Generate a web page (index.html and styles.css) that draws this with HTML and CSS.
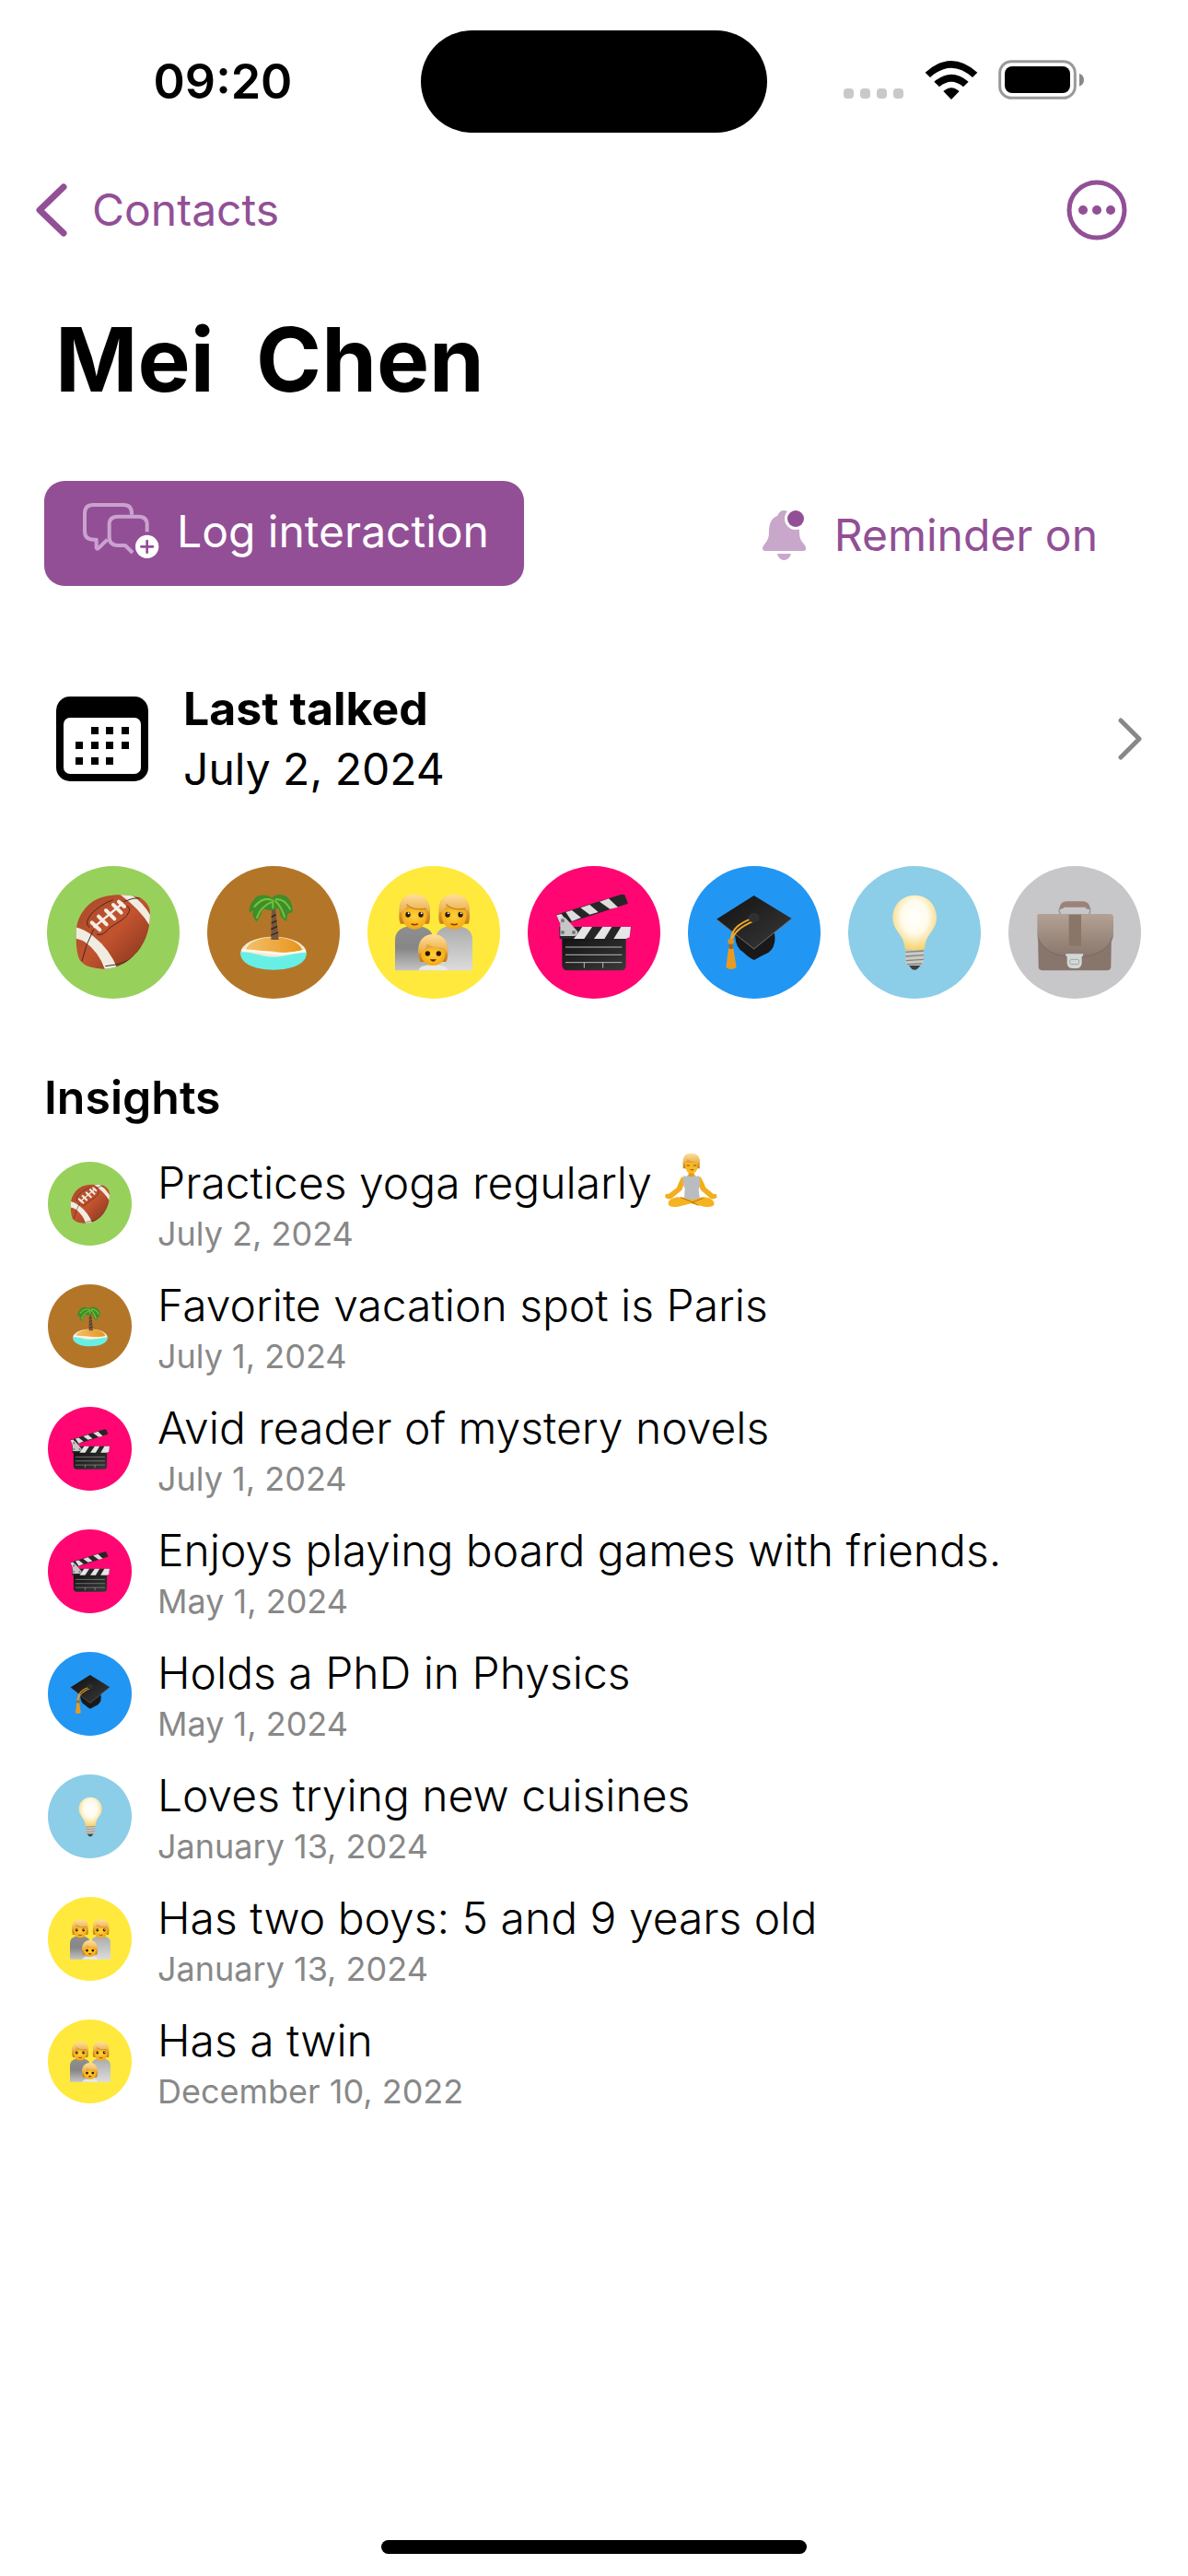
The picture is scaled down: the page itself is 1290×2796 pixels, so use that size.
FILE: index.html
```
<!DOCTYPE html>
<html lang="en">
<head>
    <meta charset="UTF-8">
    <meta name="viewport" content="width=device-width, initial-scale=1.0">
    <title>Mei Chen</title>
    <link rel="stylesheet" href="styles.css">
</head>
<body>
    <!-- Category pictures, used in both the category bar and the list -->
    <svg class="sprite" aria-hidden="true">
        <defs>
            <linearGradient id="ball" x1="0" y1="0" x2="1" y2="1">
                <stop offset="0" stop-color="#a84a2b"/>
                <stop offset=".5" stop-color="#c2532f"/>
                <stop offset="1" stop-color="#7c2f1b"/>
            </linearGradient>
            <linearGradient id="sand" x1="0" y1="0" x2="1" y2="0">
                <stop offset="0" stop-color="#f3c06a"/>
                <stop offset="1" stop-color="#e8941c"/>
            </linearGradient>
            <linearGradient id="coatDark" x1="0" y1="0" x2="0" y2="1">
                <stop offset="0" stop-color="#8f8f8f"/>
                <stop offset=".5" stop-color="#868686"/>
                <stop offset="1" stop-color="#c4c4c4"/>
            </linearGradient>
            <linearGradient id="coatLight" x1="0" y1="0" x2="0" y2="1">
                <stop offset="0" stop-color="#ababab"/>
                <stop offset="1" stop-color="#dcdcdc"/>
            </linearGradient>
            <radialGradient id="face" cx=".5" cy=".4" r=".6">
                <stop offset="0" stop-color="#ffd13b"/>
                <stop offset="1" stop-color="#f3a712"/>
            </radialGradient>
            <linearGradient id="hair" x1="0" y1="0" x2="0" y2="1">
                <stop offset="0" stop-color="#f7c670"/>
                <stop offset="1" stop-color="#c67c14"/>
            </linearGradient>
            <linearGradient id="fringe" x1="0" y1="0" x2="0" y2="1">
                <stop offset="0" stop-color="#ffdf9e"/>
                <stop offset="1" stop-color="#e9a93c"/>
            </linearGradient>
            <radialGradient id="glass" cx=".5" cy=".4" r=".6">
                <stop offset="0" stop-color="#ffffff"/>
                <stop offset=".5" stop-color="#fffbec"/>
                <stop offset="1" stop-color="#f6d36c"/>
            </radialGradient>
            <linearGradient id="leather" x1="0" y1="0" x2="0" y2="1">
                <stop offset="0" stop-color="#b3a194"/>
                <stop offset="1" stop-color="#8a776d"/>
            </linearGradient>
            <linearGradient id="cloth" x1="0" y1="0" x2="1" y2="1">
                <stop offset="0" stop-color="#111111"/>
                <stop offset="1" stop-color="#3a3a3a"/>
            </linearGradient>
            <clipPath id="ballShape">
                <path d="M5 122C8 80 28 48 60 25C90 4 140 0 180 6C215 8 240 25 245 55C248 90 242 135 215 175C185 220 140 246 95 245C50 244 20 232 12 205C5 180 4 150 5 122z"/>
            </clipPath>
        </defs>
        <symbol id="football" viewBox="0 0 252 252">
            <g clip-path="url(#ballShape)">
                <rect width="252" height="252" fill="url(#ball)"/>
                <path d="M0 108Q30 114 60 138Q115 180 140 246L100 250Q80 190 35 158Q15 146 0 146z" fill="#f1ece1"/>
                <path d="M144 0L186 4Q226 32 250 76L246 106Q212 48 144 0z" fill="#f1ece1"/>
                <path d="M24 220Q34 170 62 116M160 26Q190 12 215 14M100 236Q190 230 215 175" fill="none" stroke="#3d2b25" stroke-width="3"/>
            </g>
            <path d="M48 110Q30 95 55 65Q85 35 125 20M72 132Q90 140 110 115C130 98 165 85 176 62Q184 45 170 40" fill="none" stroke="#4f241a" stroke-width="3"/>
            <path d="M62 110L158 30" stroke="#f3eee4" stroke-width="7"/>
            <path d="M56 94L82 118M78 74L104 100M102 54L130 82M126 36L152 62M144 26L162 42" stroke="#f3eee4" stroke-width="12" stroke-linecap="round"/>
        </symbol>
        <symbol id="island" viewBox="0 0 252 252">
            <ellipse cx="126" cy="193" rx="107" ry="53" fill="#f6ead0"/>
            <path d="M36 182C45 155 90 142 128 142C172 142 212 158 220 184C180 196 160 192 128 188C90 184 60 190 36 182z" fill="url(#sand)"/>
            <path d="M19 190C60 190 80 204 120 206C160 208 190 190 233 192C236 226 190 248 126 248C65 248 14 228 19 190z" fill="#67efe6"/>
            <path d="M22 184C60 186 85 188 115 193C150 202 195 192 230 186" fill="none" stroke="#fffaf0" stroke-width="7"/>
            <path d="M118 150L120 44H132L143 150z" fill="#75563e"/>
            <path d="M118 135L142 126M118 116L138 107M119 96L136 88M119 76L134 68" stroke="#312117" stroke-width="4"/>
            <path d="M122 14C105 0 76 2 66 14C54 28 46 42 47 62L60 54L58 72L70 92L84 70L92 48L108 54L126 54L142 46L150 76L168 90L172 66L188 60C190 26 172 6 152 4C140 2 130 4 122 14z" fill="#3f8d2b"/>
            <path d="M118 20Q92 10 64 42M118 28Q84 42 72 78M124 22V46M132 24Q152 42 162 76M134 18Q162 16 180 50" fill="none" stroke="#74c23c" stroke-width="6" stroke-linecap="round"/>
        </symbol>
        <symbol id="family" viewBox="0 0 252 252">
            <path d="M0 250V150C0 120 25 105 62 105C102 105 124 120 124 150V250z" fill="url(#coatDark)"/>
            <path d="M132 250V150C132 120 155 105 190 105C230 105 252 120 252 150V250z" fill="url(#coatLight)"/>
            <path d="M76 250C80 236 98 232 124 232C150 232 168 236 172 250z" fill="#e8e8e8"/>
            <g id="grown">
                <path d="M14 56C12 18 36 3 62 3C92 3 116 22 113 58C115 76 114 88 110 98H18C12 88 12 72 14 56z" fill="url(#hair)"/>
                <path d="M22 58Q62 34 104 58C106 92 92 116 63 116C36 116 20 92 22 58z" fill="url(#face)"/>
                <path d="M14 62C12 20 34 2 62 2C94 2 118 24 112 66C110 56 106 50 98 48C72 54 48 46 38 34C38 48 30 58 14 62z" fill="url(#fringe)"/>
                <path d="M38 34C50 50 76 54 100 48" fill="none" stroke="#b97316" stroke-width="3"/>
                <ellipse cx="42" cy="68" rx="8" ry="9" fill="#2c1608"/>
                <ellipse cx="84" cy="68" rx="8" ry="9" fill="#2c1608"/>
                <circle cx="44" cy="64" r="3" fill="#ffffff"/>
                <circle cx="86" cy="64" r="3" fill="#ffffff"/>
                <path d="M53 98Q63 104 74 98" fill="none" stroke="#8c3d10" stroke-width="5"/>
            </g>
            <use href="#grown" x="129" y="0"/>
            <path d="M76 190C74 152 94 133 124 133C154 133 174 154 172 190Q172 212 166 222H82Q76 210 76 190z" fill="url(#hair)"/>
            <path d="M84 186Q125 164 164 186C166 214 150 234 124 234C98 234 82 214 84 186z" fill="url(#face)"/>
            <path d="M76 196C72 152 96 132 124 132C156 132 176 156 171 196C166 186 160 178 150 176C130 176 112 170 104 162C102 176 94 188 76 196z" fill="url(#fringe)"/>
            <circle cx="106" cy="195" r="8" fill="#2c1608"/>
            <circle cx="142" cy="195" r="8" fill="#2c1608"/>
            <path d="M113 214H135Q124 228 113 214z" fill="#5d230d"/>
        </symbol>
        <symbol id="clapper" viewBox="0 0 252 252">
            <path d="M22 138H230V236Q228 250 214 250H40Q24 250 22 234z" fill="url(#cloth)"/>
            <path d="M4 68L216 2L226 4L237 32L40 96L14 94z" fill="#262626"/>
            <path d="M34 60L54 54L84 78L54 90zM82 46L112 36L140 60L112 68zM144 26L174 16L204 44L178 50zM4 70L20 66L40 94L14 94z" fill="#dedede"/>
            <path d="M13 108H247L242 142L230 147H14z" fill="#262626"/>
            <path d="M60 147L88 108H120L94 147zM126 147L154 108H184L160 147zM190 147L214 108H246L242 142L230 147z" fill="#e6e6e6"/>
            <path d="M16 80Q30 72 36 82L73 124Q72 138 60 138H16z" fill="#c6c6c6"/>
            <circle cx="24" cy="88" r="6" fill="#777777"/>
            <circle cx="24" cy="126" r="6" fill="#777777"/>
            <circle cx="60" cy="126" r="6" fill="#777777"/>
            <path d="M33 174H217M33 199H217M33 224H217M94 224V242M155 224V242" stroke="#b9b9b9" stroke-width="3"/>
        </symbol>
        <symbol id="cap" viewBox="0 0 252 252">
            <path d="M64 120H190Q202 170 172 192Q150 202 126 216Q110 210 92 192Q60 175 64 120z" fill="#19191a"/>
            <path d="M125 6L248 81L125 180L3 83z" fill="url(#cloth)"/>
            <path d="M3 83L125 180L248 81" fill="none" stroke="#707070" stroke-width="3"/>
            <path d="M120 80C80 96 54 112 50 150M126 88C90 104 62 120 52 152" fill="none" stroke="#f0a828" stroke-width="6"/>
            <ellipse cx="125" cy="78" rx="18" ry="16" fill="#303032"/>
            <circle cx="50" cy="156" r="10" fill="#e2941c"/>
            <path d="M42 178H58L68 240Q50 252 34 240z" fill="#e89b22"/>
            <path d="M44 164H56V180H44z" fill="#a9670f"/>
        </symbol>
        <symbol id="bulb" viewBox="0 0 252 252">
            <path d="M96 178H156V220Q152 234 142 238H112Q98 232 96 220z" fill="#c9c9c5"/>
            <path d="M97 190L156 186M97 204L156 200M98 218L156 214M102 230L150 228" stroke="#84847f" stroke-width="4"/>
            <path d="M108 234H146L134 246Q127 250 118 246z" fill="#3e3f40"/>
            <path d="M127 5C170 5 198 38 198 78C198 112 174 128 165 150Q160 164 159 180Q126 186 95 180Q94 164 88 150C78 128 55 112 55 78C55 38 84 5 127 5z" fill="url(#glass)"/>
        </symbol>
        <symbol id="briefcase" viewBox="0 0 252 252">
            <path d="M80 66Q72 58 78 46M172 66Q180 58 174 46" fill="none" stroke="#94a0a2" stroke-width="5"/>
            <path d="M76 50Q78 26 98 25H154Q174 26 177 50Q165 54 160 44H92Q86 52 76 50z" fill="#9c8379"/>
            <path d="M6 110H246L244 240Q242 250 230 250H22Q10 250 8 240z" fill="#88756c"/>
            <path d="M4 70Q6 66 14 66H240Q250 66 252 74V140Q230 206 128 206Q28 206 4 140z" fill="url(#leather)"/>
            <path d="M6 144Q32 206 128 206Q224 206 248 144" fill="none" stroke="#7b6961" stroke-width="3"/>
            <rect x="107" y="68" width="40" height="102" fill="#8a7569"/>
            <path d="M97 196H153V204H149V228Q146 243 132 243H118Q104 243 101 228V204H97z" fill="#d3d7d5"/>
            <rect x="110" y="214" width="30" height="16" rx="6" fill="none" stroke="#9fa5a3" stroke-width="3"/>
        </symbol>
    </svg>

    <header class="status-bar">
        <time class="clock">09:20</time>
        <div class="island"></div>
        <div class="status-icons">
            <svg width="66" height="12" viewBox="0 0 66 12" fill="#c9c9c9">
                <rect width="11" height="11" rx="4"/>
                <rect x="18" width="11" height="11" rx="4"/>
                <rect x="36" width="11" height="11" rx="4"/>
                <rect x="54" width="11" height="11" rx="4"/>
            </svg>
            <svg width="58" height="42" viewBox="0 0 174 126">
                <path d="M2 38Q86 -38 172 38L156 54Q87 -8 18 54z"/>
                <path d="M31 68Q87 20 143 68L126 85Q87 52 48 85z"/>
                <path d="M61 99Q87 76 113 99L87 126z"/>
            </svg>
            <svg width="93" height="43" viewBox="0 0 279 129">
                <rect x="5" y="5" width="245" height="119" rx="38" fill="none" stroke="#999999" stroke-width="9"/>
                <rect x="21" y="21" width="213" height="87" rx="24"/>
                <path d="M264 44Q279 50 279 65Q279 80 264 86z" fill="#888888"/>
            </svg>
        </div>
    </header>

    <nav class="nav-bar">
        <a class="back" href="#">
            <svg width="36" height="58" viewBox="0 0 36 58"><path d="M31 4L5 29L31 54"/></svg>
            Contacts
        </a>
        <button class="more" type="button" aria-label="More">
            <svg width="66" height="66" viewBox="0 0 66 66">
                <circle cx="33" cy="33" r="30"/>
                <g class="dots"><circle cx="18" cy="33" r="5"/><circle cx="33" cy="33" r="5"/><circle cx="48" cy="33" r="5"/></g>
            </svg>
        </button>
    </nav>

    <main>
        <h1>Mei&nbsp; Chen</h1>

        <div class="actions">
            <button class="log" type="button">
                <svg width="84" height="62" viewBox="0 0 252 186">
                    <path class="bubble" d="M159 38V34Q159 6 132 6H34Q6 6 6 34V92Q6 119 36 119H44V146Q46 152 52 146L80 119"/>
                    <path class="bubble" d="M209 94V70Q209 44 182 44H113Q86 44 86 70V110Q86 137 114 138H138L162 162"/>
                    <circle cx="209" cy="142" r="38" fill="#ffffff"/>
                    <path class="plus" d="M190 142H228M209 123V161"/>
                </svg>
                Log interaction
            </button>
            <button class="reminder" type="button">
                <svg width="48" height="54" viewBox="0 0 48 54">
                    <path d="M23 0C18 0 17 5 16 6C8 9 7 17 7 24C7 34 1 36 0 41Q0 44 3 44H44Q48 44 47 40C46 36 40 34 40 24C40 17 39 9 31 6C30 5 29 0 23 0z" fill="#c8a7ca"/>
                    <path d="M16 47H31Q29 54 23 54Q18 54 16 47z" fill="#c8a7ca"/>
                    <circle cx="36" cy="9" r="12" fill="#ffffff"/>
                    <circle cx="36" cy="9" r="9" fill="#924f96"/>
                </svg>
                Reminder on
            </button>
        </div>

        <a class="last-talked" href="#">
            <svg width="100" height="92" viewBox="0 0 100 92">
                <rect width="100" height="92" rx="15"/>
                <rect x="8" y="23" width="84" height="61" rx="7" fill="#ffffff"/>
                <path class="days" d="M38 37h8M54 37h8M71 37h8M21 53h8M38 53h8M54 53h8M71 53h8M21 70h8M38 70h8M54 70h8"/>
            </svg>
            <span class="last-text">
                <strong>Last talked</strong>
                <span>July 2, 2024</span>
            </span>
            <svg class="chevron" width="26" height="46" viewBox="0 0 26 46"><path d="M3 3L23 23L3 43"/></svg>
        </a>

        <div class="categories">
            <button class="badge green" type="button" aria-label="Sport"><svg><use href="#football"/></svg></button>
            <button class="badge brown" type="button" aria-label="Travel"><svg><use href="#island"/></svg></button>
            <button class="badge yellow" type="button" aria-label="Family"><svg><use href="#family"/></svg></button>
            <button class="badge pink" type="button" aria-label="Entertainment"><svg><use href="#clapper"/></svg></button>
            <button class="badge blue" type="button" aria-label="Education"><svg><use href="#cap"/></svg></button>
            <button class="badge sky" type="button" aria-label="Ideas"><svg><use href="#bulb"/></svg></button>
            <button class="badge grey" type="button" aria-label="Work"><svg><use href="#briefcase"/></svg></button>
        </div>

        <h2>Insights</h2>
        <ul class="insights">
            <li>
                <span class="badge green"><svg><use href="#football"/></svg></span>
                <div>
                    <p>Practices yoga regularly
                        <svg class="yoga" width="60" height="60" viewBox="0 0 180 180" role="img" aria-label="Person in lotus position">
                            <path d="M58 78Q48 96 42 114L14 136Q2 130 4 146Q12 154 24 150L58 122L70 88zM118 78Q130 96 136 114L162 136Q174 130 172 146Q164 154 152 150L120 122L106 88z" fill="#f2ae1d"/>
                            <path d="M14 168Q12 150 44 145L88 148L132 145Q164 150 164 168Q160 180 130 176L88 166L46 176Q18 180 14 168z" fill="#f6b320"/>
                            <path d="M54 146Q84 156 112 172M128 148Q100 158 90 164" fill="none" stroke="#b9720c" stroke-width="3"/>
                            <path d="M64 75Q76 80 78 72H100Q104 80 114 75Q120 100 113 120L116 148Q88 158 66 148L68 118Q58 96 64 75z" fill="#b9bcc1"/>
                            <rect x="80" y="56" width="18" height="22" fill="#e59c14"/>
                            <path d="M62 52V32Q64 4 88 4Q118 4 116 34V52z" fill="url(#hair)"/>
                            <path d="M68 32H110Q112 68 90 68Q68 68 68 32z" fill="#f7b924"/>
                            <path d="M62 36Q60 2 88 2Q120 2 116 38L110 32Q90 32 76 20Q76 32 62 36z" fill="url(#fringe)"/>
                            <path d="M74 42H84M96 42H106M86 56H96" stroke="#8e4a0b" stroke-width="3"/>
                        </svg>
                    </p>
                    <time>July 2, 2024</time>
                </div>
            </li>
            <li>
                <span class="badge brown"><svg><use href="#island"/></svg></span>
                <div>
                    <p>Favorite vacation spot is Paris</p>
                    <time>July 1, 2024</time>
                </div>
            </li>
            <li>
                <span class="badge pink"><svg><use href="#clapper"/></svg></span>
                <div>
                    <p>Avid reader of mystery novels</p>
                    <time>July 1, 2024</time>
                </div>
            </li>
            <li>
                <span class="badge pink"><svg><use href="#clapper"/></svg></span>
                <div>
                    <p>Enjoys playing board games with friends.</p>
                    <time>May 1, 2024</time>
                </div>
            </li>
            <li>
                <span class="badge blue"><svg><use href="#cap"/></svg></span>
                <div>
                    <p>Holds a PhD in Physics</p>
                    <time>May 1, 2024</time>
                </div>
            </li>
            <li>
                <span class="badge sky"><svg><use href="#bulb"/></svg></span>
                <div>
                    <p>Loves trying new cuisines</p>
                    <time>January 13, 2024</time>
                </div>
            </li>
            <li>
                <span class="badge yellow"><svg><use href="#family"/></svg></span>
                <div>
                    <p>Has two boys: 5 and 9 years old</p>
                    <time>January 13, 2024</time>
                </div>
            </li>
            <li>
                <span class="badge yellow"><svg><use href="#family"/></svg></span>
                <div>
                    <p>Has a twin</p>
                    <time>December 10, 2022</time>
                </div>
            </li>
        </ul>
    </main>

    <footer class="home-bar"></footer>
</body>
</html>
```
FILE: styles.css
```
* {
    box-sizing: border-box;
}
body {
    margin: 0;
    min-height: 100vh;
    display: flex;
    flex-direction: column;
    background-color: #ffffff;
    color: #000000;
    font-family: Inter, "Liberation Sans", sans-serif;
    font-size: 48px;
    line-height: 66px;
}
h1, h2, p, ul {
    margin: 0;
    padding: 0;
}
button {
    padding: 0;
    border: 0;
    background: none;
    font: inherit;
    cursor: pointer;
}
a {
    color: inherit;
    text-decoration: none;
}
svg {
    flex: none;
}
.sprite {
    position: absolute;
    width: 0;
    height: 0;
}

/* Status bar */
.status-bar {
    display: grid;
    grid-template-columns: 1fr 376px 1fr;
    align-items: center;
    padding-top: 33px;
}
.clock {
    padding-left: 27px;
    text-align: center;
    font-size: 52px;
    font-weight: 600;
}
.island {
    height: 111px;
    border-radius: 56px;
    background-color: #000000;
}
.status-icons {
    display: flex;
    align-items: flex-end;
    justify-content: flex-end;
    gap: 22px;
    padding: 0 113px 4px 0;
}

/* Navigation */
.nav-bar {
    display: flex;
    align-items: center;
    justify-content: space-between;
    height: 168px;
    padding: 0 66px 0 38px;
    color: #924f96;
}
.back {
    display: flex;
    align-items: center;
    gap: 26px;
}
.back path {
    fill: none;
    stroke: #924f96;
    stroke-width: 7;
    stroke-linecap: round;
    stroke-linejoin: round;
}
.more svg {
    display: block;
    fill: none;
    stroke: #924f96;
    stroke-width: 5;
}
.more .dots {
    fill: #924f96;
    stroke: none;
}

/* Contact */
h1 {
    padding: 12px 60px 0;
    font-size: 96px;
    font-weight: 700;
    line-height: 132px;
}
.actions {
    display: flex;
    align-items: center;
    justify-content: space-between;
    margin-top: 66px;
    padding: 0 98px 0 48px;
}
.log {
    display: flex;
    align-items: center;
    gap: 18px;
    height: 114px;
    padding: 0 38px 4px 42px;
    border-radius: 22px;
    background-color: #924f96;
    color: #ffffff;
}
.log .bubble {
    fill: none;
    stroke: #cba2cf;
    stroke-width: 12;
    stroke-linejoin: round;
}
.log .plus {
    stroke: #924f96;
    stroke-width: 8;
    stroke-linecap: round;
}
.reminder {
    display: flex;
    align-items: center;
    gap: 30px;
    padding-top: 4px;
    color: #924f96;
}
.last-talked {
    display: flex;
    align-items: center;
    margin-top: 100px;
    padding: 0 50px 0 61px;
}
.last-text {
    display: flex;
    flex-direction: column;
    flex: 1;
    padding-left: 38px;
}
.last-text strong {
    font-size: 50px;
    font-weight: 700;
}
.days {
    stroke: #000000;
    stroke-width: 8;
}
.chevron {
    fill: none;
    stroke: #888888;
    stroke-width: 5;
    stroke-linecap: round;
    stroke-linejoin: round;
}

/* Category circles */
.categories {
    display: flex;
    justify-content: space-between;
    margin-top: 72px;
    padding: 0 51px;
}
.badge {
    display: flex;
    align-items: center;
    justify-content: center;
    width: 144px;
    height: 144px;
    border-radius: 50%;
}
.badge svg {
    width: 84px;
    height: 84px;
}
.green {
    background-color: #98d05c;
}
.brown {
    background-color: #b37629;
}
.yellow {
    background-color: #ffe93c;
}
.pink {
    background-color: #ff0672;
}
.blue {
    background-color: #2296f3;
}
.sky {
    background-color: #8ccde8;
}
.grey {
    background-color: #c7c7c9;
}

/* Insights */
h2 {
    margin-top: 74px;
    padding: 0 48px;
    font-size: 50px;
    font-weight: 600;
}
.insights {
    margin-top: 16px;
    padding: 0 52px;
    list-style: none;
}
.insights li {
    display: flex;
    align-items: center;
    gap: 28px;
    height: 133px;
}
.insights .badge {
    width: 91px;
    height: 91px;
}
.insights .badge svg {
    width: 44px;
    height: 44px;
}
.insights div {
    padding-top: 4px;
}
.insights p {
    font-weight: 300;
    line-height: 60px;
}
.insights time {
    display: block;
    color: #888888;
    font-size: 36px;
    line-height: 50px;
}
.yoga {
    margin: -10px 0;
}

.home-bar {
    width: 462px;
    height: 15px;
    margin: auto auto 24px;
    border-radius: 8px;
    background-color: #000000;
}
```
